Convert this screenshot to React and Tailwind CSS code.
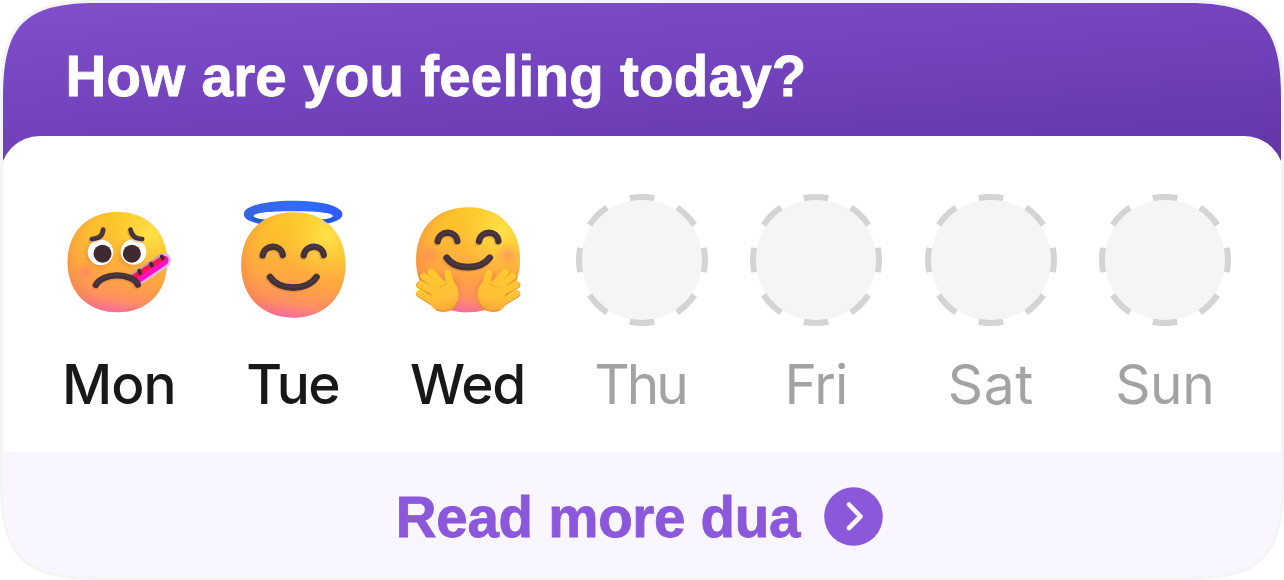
import React from "react";

const INK = "#42303a";

function Defs({ id }) {
  return (
    <defs>
      <linearGradient id={`${id}-base`} x1="0.6" y1="0" x2="0.44" y2="1">
        <stop offset="0" stopColor="#fcc926" />
        <stop offset="0.35" stopColor="#fdb933" />
        <stop offset="0.65" stopColor="#ffa542" />
        <stop offset="0.86" stopColor="#ff9060" />
        <stop offset="0.95" stopColor="#fc7894" />
        <stop offset="1" stopColor="#f962c4" />
      </linearGradient>
      <radialGradient id={`${id}-light`} cx="0.82" cy="0.22" r="0.42">
        <stop offset="0" stopColor="#ffe94e" stopOpacity="0.85" />
        <stop offset="1" stopColor="#ffd83c" stopOpacity="0" />
      </radialGradient>
      <radialGradient id={`${id}-edge`} cx="0.58" cy="0.46" r="0.6">
        <stop offset="0.74" stopColor="#ec7c48" stopOpacity="0" />
        <stop offset="1" stopColor="#ec7c48" stopOpacity="0.42" />
      </radialGradient>
      <radialGradient id={`${id}-cheek`}>
        <stop offset="0" stopColor="#ff6c78" stopOpacity="0.6" />
        <stop offset="1" stopColor="#ff7f6c" stopOpacity="0" />
      </radialGradient>
      <filter id={`${id}-soft`} x="-30%" y="-30%" width="160%" height="160%">
        <feGaussianBlur stdDeviation="6" />
      </filter>
      <filter id={`${id}-fine`} x="-30%" y="-30%" width="160%" height="160%">
        <feGaussianBlur stdDeviation="2" />
      </filter>
    </defs>
  );
}

function Face({ id, d }) {
  return (
    <>
      <path d={d} fill={`url(#${id}-base)`} />
      <path d={d} fill={`url(#${id}-light)`} />
      <path d={d} fill={`url(#${id}-edge)`} />
    </>
  );
}

function Strokes({ id, d, width }) {
  return (
    <g fill="none" strokeLinecap="round" strokeLinejoin="round">
      <path d={d} stroke="#d0702a" strokeOpacity="0.35" strokeWidth={width + 2} transform="translate(-3 4)" filter={`url(#${id}-fine)`} />
      <path d={d} stroke={INK} strokeWidth={width} />
      <path d={d} stroke="#5b4850" strokeOpacity="0.5" strokeWidth={width * 0.25} transform="translate(1 -2)" filter={`url(#${id}-fine)`} />
    </g>
  );
}

function SickFace() {
  const id = "sick";
  return (
    <svg viewBox="0 0 132 132" className="size-[132px]" role="img">
      <Defs id={id} />
      <g transform="translate(-2.8 -4) scale(0.33333)">
        <Face id={id} d="M202 66C292 66 351 126 351 216C351 306 292 367 202 367C112 367 52 306 52 216C52 126 112 66 202 66Z" />
        <circle cx="106" cy="245" r="30" fill="url(#sick-cheek)" />
        <g fill="#c86420" opacity="0.4" filter="url(#sick-soft)">
          <circle cx="146" cy="192" r="37" />
          <circle cx="244" cy="192" r="37" />
        </g>
        <circle cx="151" cy="187" r="38.5" fill="#fff" />
        <circle cx="250" cy="186" r="38.5" fill="#fff" />
        <circle cx="157" cy="191" r="27" fill="#402a32" />
        <circle cx="245" cy="191" r="27" fill="#402a32" />
        <Strokes id={id} width={14} d="M125 147Q157 146 159 119M241 119Q246 147 276 147" />
        <path d="M236 258L334 194Q350 185 359 198Q368 216 353 230L268 286Z" fill="#dcb8f0" />
        <path d="M238 259L334 199Q347 193 354 204Q358 216 347 225L268 279Z" fill="#ff10c0" />
        <path d="M238 259L334 199Q345 195 351 203L255 266Z" fill="#f51944" />
        <path d="M236 258L332 195" stroke="#c49aae" strokeWidth="5" />
        <path d="M267 242L270 250M302 221L305 227M335 199L338 205" stroke="#382a38" strokeWidth="11" strokeLinecap="round" />
        <Strokes id={id} width={19} d="M137 285C156 247 246 247 263 284" />
      </g>
    </svg>
  );
}

function HaloFace() {
  const id = "halo";
  return (
    <svg viewBox="0 0 132 132" className="size-[132px]" role="img">
      <Defs id={id} />
      <defs>
        <linearGradient id="halo-ring" x1="0" y1="0" x2="1" y2="0">
          <stop offset="0" stopColor="#3563dc" />
          <stop offset="0.25" stopColor="#3569ee" />
          <stop offset="0.65" stopColor="#2f6bff" />
          <stop offset="1" stopColor="#3159ff" />
        </linearGradient>
      </defs>
      <g transform="translate(-2.2 -4) scale(0.33333)">
        <path
          fill="url(#halo-ring)"
          fillRule="evenodd"
          d="M57 73C57 47 123 32 205 32S353 47 353 73S287 109 205 109S57 99 57 73ZM86 78C86 88 140 92 205 92S324 88 324 78S270 64 205 64S86 68 86 78Z"
        />
        <path d="M84 84C98 95 135 99 205 99S314 95 328 84" fill="none" stroke="#1a56ae" strokeWidth="9" strokeOpacity="0.7" filter="url(#halo-fine)" />
        <Face id={id} d="M206 67C300 67 362 130 362 225C362 320 300 383 206 383C112 383 49 320 49 225C49 130 112 67 206 67Z" />
        <Strokes id={id} width={19} d="M114 196C119 162 169 162 174 195M237 196C242 162 292 162 297 195" />
        <Strokes id={id} width={20} d="M136 261C163 303 247 304 275 261" />
      </g>
    </svg>
  );
}

function Hand() {
  return (
    <g>
      <g fill="none" strokeLinecap="round" stroke="#e8922a">
        <path d="M59 312L112 345M59 285L105 312M69 261L110 299M91 248L124 290" strokeWidth="23" />
      </g>
      <g fill="none" strokeLinecap="round" stroke="url(#hug-hand)" strokeWidth="21">
        <path d="M59 310L112 343" />
        <path d="M60 283L108 309" />
        <path d="M70 259L116 294" />
        <path d="M92 247L130 286" />
      </g>
      <path d="M132 253C129 238 149 235 153 249L161 278C174 287 178 311 173 333C166 361 134 373 107 360C91 352 88 340 92 322C95 298 113 276 135 278Z" fill="url(#hug-hand)" />
      <path d="M140 278C134 288 126 290 117 291" fill="none" stroke="#e78d1d" strokeWidth="3" strokeOpacity="0.6" filter="url(#hug-fine)" />
      <path d="M107 359C134 370 164 360 172 333" fill="none" stroke="#f08b25" strokeWidth="4" strokeOpacity="0.8" filter="url(#hug-fine)" />
    </g>
  );
}

function HugFace() {
  const id = "hug";
  return (
    <svg viewBox="0 0 132 132" className="size-[132px]" role="img">
      <Defs id={id} />
      <defs>
        <linearGradient id="hug-hand" gradientUnits="userSpaceOnUse" x1="100" y1="240" x2="130" y2="366">
          <stop offset="0" stopColor="#ffc92f" />
          <stop offset="0.65" stopColor="#ffc037" />
          <stop offset="1" stopColor="#fba63b" />
        </linearGradient>
      </defs>
      <g transform="translate(-1.6 -4) scale(0.33333)">
        <Face id={id} d="M203 52C296 52 359 114 359 209C359 304 296 367 203 367C109 367 47 304 47 209C47 114 109 52 203 52Z" />
        <circle cx="88" cy="194" r="36" fill="url(#hug-cheek)" opacity="0.7" />
        <circle cx="322" cy="194" r="36" fill="url(#hug-cheek)" opacity="0.8" />
        <Strokes id={id} width={19} d="M112 154C117 120 166 120 171 153M236 154C241 120 290 120 294 153" />
        <Strokes id={id} width={20} d="M139 203C164 241 241 241 268 203" />
        <g fill="#e8663f" opacity="0.35" filter="url(#hug-soft)">
          <ellipse cx="135" cy="306" rx="45" ry="55" />
          <ellipse cx="273" cy="306" rx="45" ry="55" />
        </g>
        <Hand />
        <g transform="translate(407 0) scale(-1 1)">
          <Hand />
        </g>
      </g>
    </svg>
  );
}

function EmptyDay() {
  return (
    <svg viewBox="0 0 132 132" className="size-[132px]">
      <circle cx="66" cy="66" r="60.3" fill="#f5f5f5" />
      <circle cx="66" cy="66" r="63" fill="none" stroke="#d4d4d4" strokeWidth="6" pathLength="16" strokeDasharray="1 1" strokeDashoffset="0.5" />
    </svg>
  );
}

const DAYS = [
  { label: "Mon", Icon: SickFace, tracking: "tracking-[-1px]" },
  { label: "Tue", Icon: HaloFace, tracking: "pr-[1px] tracking-[-1.5px]" },
  { label: "Wed", Icon: HugFace, tracking: "tracking-[-1.2px]" },
  { label: "Thu", tracking: "pr-[4px] tracking-[-3px]" },
  { label: "Fri", tracking: "pr-[1px] tracking-[-1px]" },
  { label: "Sat", tracking: "tracking-[0.7px]" },
  { label: "Sun", tracking: "pr-[1px] tracking-[-0.4px]" },
];

function Day({ label, Icon, tracking }) {
  const tone = Icon ? "font-medium text-[#181818]" : "font-normal text-[#a3a3a3]";
  return (
    <div className="flex flex-col items-center">
      {Icon ? <Icon /> : <EmptyDay />}
      <span className={`mt-[24px] text-[55px] leading-[68px] ${tone} ${tracking}`}>{label}</span>
    </div>
  );
}

export default function App() {
  return (
    <div className="h-[580px] w-[1284px] overflow-hidden bg-white font-['Inter',sans-serif]">
      <div className="h-[580px] w-[1284px] bg-[#f4f4f4] p-[3px] [clip-path:path('M0_97C0_23_23_0_97_0H1187C1261_0_1284_23_1284_97V483C1284_557_1261_580_1187_580H97C23_580_0_557_0_483Z')]">
        <div className="flex h-[574px] w-[1278px] flex-col overflow-hidden bg-white [clip-path:path('M0_94C0_22_22_0_94_0H1184C1256_0_1278_22_1278_94V480C1278_552_1256_574_1184_574H94C22_574_0_552_0_480Z')]">
          <header className="h-[160px] shrink-0 bg-[linear-gradient(175.5deg,#804fcd,#6235a8)] px-[62.5px] pt-[40px]">
            <h1 className="font-['Liberation_Sans',sans-serif] text-[56.5px] leading-[68px] font-bold tracking-[0.25px] whitespace-nowrap text-white [-webkit-text-stroke:0.8px_#fff]">
              How are you feeling today?
            </h1>
          </header>
          <main className="-mx-[3px] -mt-[27px] grid h-[316px] shrink-0 grid-cols-7 rounded-t-[40px] bg-white px-[31.6px] pt-[58px]">
            {DAYS.map((day) => (
              <Day key={day.label} {...day} />
            ))}
          </main>
          <footer className="flex flex-1 items-center justify-center gap-[24px] bg-[#f9f6ff] pt-[3px] pr-[5px]">
            <span className="pt-[3px] font-['Liberation_Sans',sans-serif] text-[56.5px] leading-[68px] font-bold tracking-[-0.3px] whitespace-nowrap text-[#8b57db] [-webkit-text-stroke:0.8px_#8b57db]">
              Read more dua
            </span>
            <svg viewBox="0 0 59 59" className="size-[59px]">
              <circle cx="29.5" cy="29.5" r="29.3" fill="#8b57db" />
              <path d="M25 17.5L36.5 29.5L25 41" fill="none" stroke="#f9f6ff" strokeWidth="4.6" strokeLinecap="round" strokeLinejoin="round" />
            </svg>
          </footer>
        </div>
      </div>
    </div>
  );
}
